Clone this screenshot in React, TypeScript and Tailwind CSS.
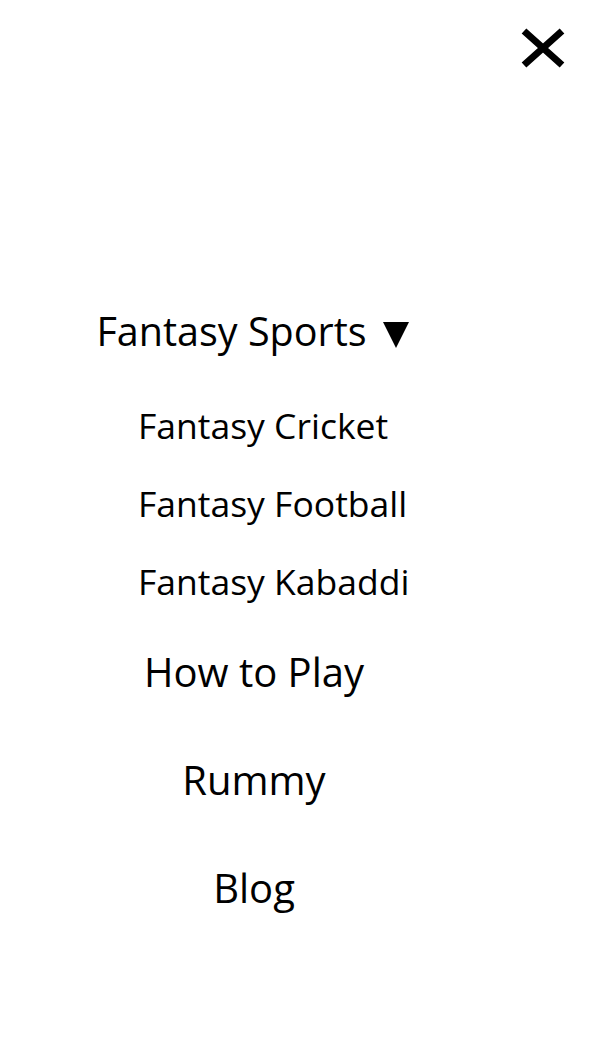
import React from "react";

export default function App() {
  const font = { fontFamily: '"Open Sans", "Noto Sans", sans-serif' };
  return (
    <div className="min-h-[1037px] w-full bg-white text-black" style={font}>
      <div className="flex justify-end pt-[28px] pr-[24px]">
        <button aria-label="Close" className="block h-[40px] w-[44px]">
          <svg width="44" height="40" viewBox="0 0 44 40">
            <path d="M3 3 L41 37 M41 3 L3 37" stroke="#000" strokeWidth="7" />
          </svg>
        </button>
      </div>
      <nav className="w-[508px] pt-[233px]">
        <ul className="flex flex-col">
          <li className="text-center">
            <span className="text-[39.5px] leading-[60px]">
              Fantasy Sports
              <svg
                className="relative top-[2px] ml-[16px] mr-[3px] inline-block align-baseline"
                width="26"
                height="26"
                viewBox="0 0 26 26"
              >
                <path d="M0 0 H26 L13 26 Z" fill="#000" />
              </svg>
            </span>
            <ul className="mt-[25px] pl-[138px] text-left text-[35.5px] leading-[78px]">
              <li>Fantasy Cricket</li>
              <li>Fantasy Football</li>
              <li>Fantasy Kabaddi</li>
            </ul>
          </li>
          <li className="-mt-[2px] text-center text-[40px] leading-[108px]">How to Play</li>
          <li className="text-center text-[40px] leading-[108px]">Rummy</li>
          <li className="text-center text-[40px] leading-[108px]">Blog</li>
        </ul>
      </nav>
    </div>
  );
}
